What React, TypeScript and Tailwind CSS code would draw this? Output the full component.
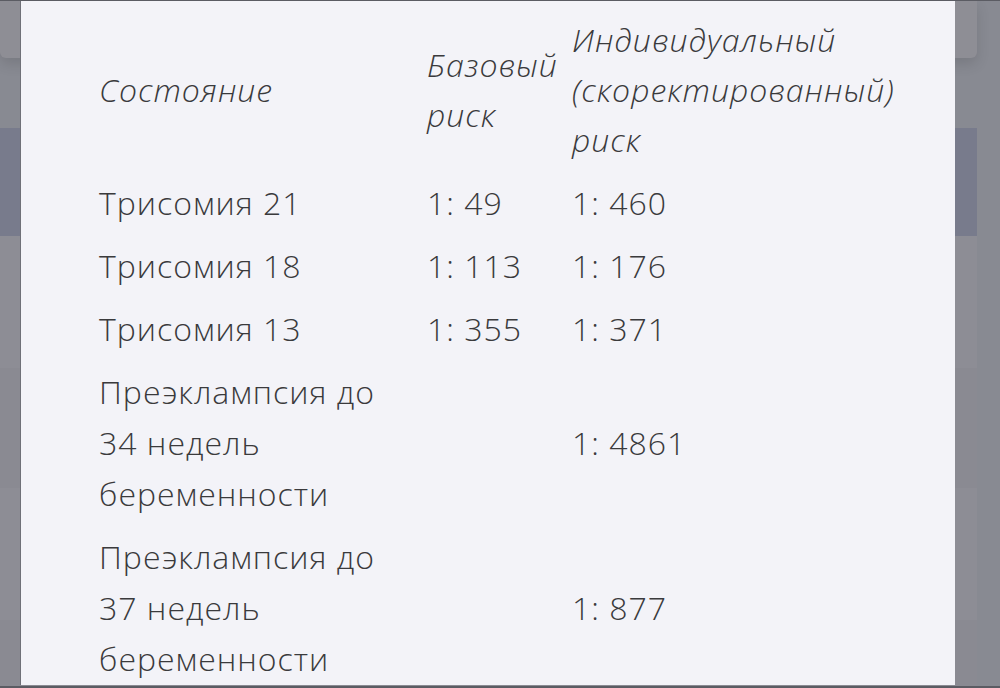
import React from "react";

const rows = [
  { name: ["Трисомия 21"], base: "1: 49", ind: "1: 460" },
  { name: ["Трисомия 18"], base: "1: 113", ind: "1: 176" },
  { name: ["Трисомия 13"], base: "1: 355", ind: "1: 371" },
  { name: ["Преэклампсия до", "34 недель", "беременности"], base: "", ind: "1: 4861" },
  { name: ["Преэклампсия до", "37 недель", "беременности"], base: "", ind: "1: 877" },
];

const Backdrop = () => (
  <div className="flex h-full w-full bg-[#888a92]">
    <div className="flex w-[977px] flex-col">
      <div className="h-[57px] rounded-b-[6px] bg-[#8e8e95] shadow-[0_6px_14px_rgba(0,0,0,0.12)]"></div>
      <div className="h-[70px]"></div>
      <div className="h-[108px] bg-[#787b8c]"></div>
      <div className="h-[132px] bg-[#8d8d95]"></div>
      <div className="h-[120px] bg-[#8a8a92]"></div>
      <div className="h-[132px] bg-[#8d8d95]"></div>
      <div className="flex-1 bg-[#8a8a92]"></div>
    </div>
    <div className="flex-1"></div>
  </div>
);

export default function App() {
  return (
    <div className="relative h-[688px] w-[1000px] overflow-hidden border-t border-b-2 border-[#5b5c63] bg-[#888a92]">
      <Backdrop />
      <div
        className="absolute left-[21px] top-0 h-[684px] w-[934px] bg-[#f3f3f8] pl-[78px] pt-[14px] text-[#3a3a3c] shadow-[-1px_0_0_#6f7078]"
        style={{ fontFamily: "'Open Sans', Lato, sans-serif" }}
      >
        <table className="border-collapse text-left">
          <thead>
            <tr className="text-[32px] font-light italic leading-[50px] tracking-[1px]">
              <th className="w-[328px] pb-[6px] align-middle font-light">Состояние</th>
              <th className="w-[145px] pb-[6px] align-middle font-light">
                Базовый
                <br />
                риск
              </th>
              <th className="pb-[6px] align-middle font-light">
                Индивидуальный
                <br />
                (скоректированный)
                <br />
                риск
              </th>
            </tr>
          </thead>
          <tbody className="text-[32px] font-light leading-[51px] tracking-[1px]">
            {rows.map((r, i) => (
              <tr key={i}>
                <td className="py-[6px] align-middle">
                  {r.name.map((l, j) => (
                    <div key={j}>{l}</div>
                  ))}
                </td>
                <td className="py-[6px] align-middle">{r.base}</td>
                <td className="py-[6px] align-middle">{r.ind}</td>
              </tr>
            ))}
          </tbody>
        </table>
      </div>
    </div>
  );
}
